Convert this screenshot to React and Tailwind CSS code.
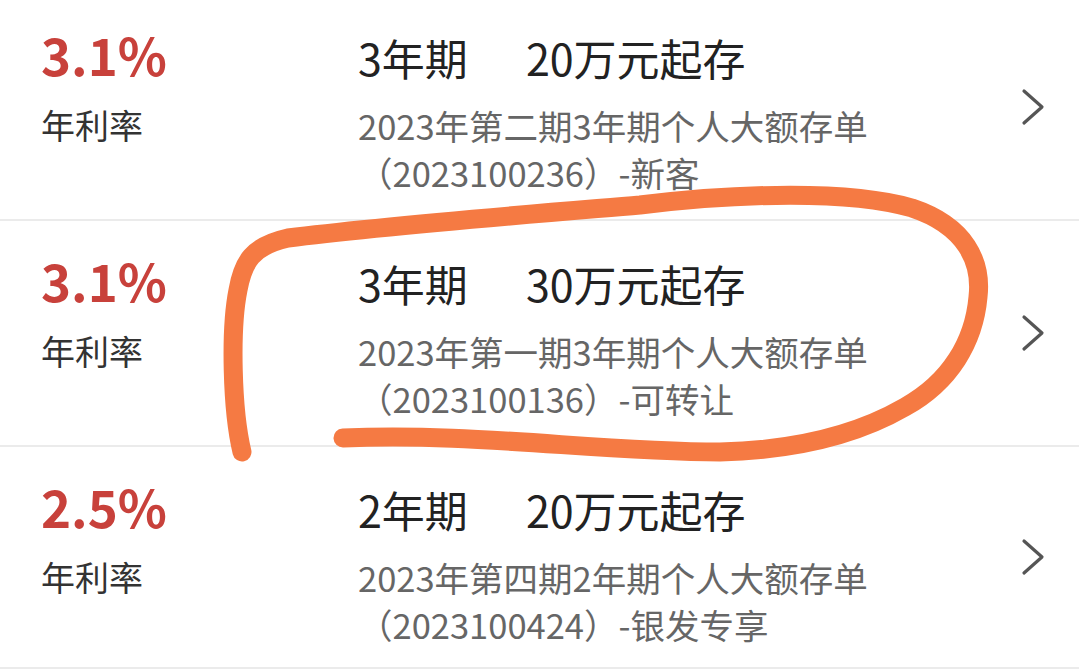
const products = [
  {
    rate: "3.1%",
    term: "3年期",
    min: "20万元起存",
    name: "2023年第二期3年期个人大额存单",
    code: "（2023100236）-新客",
  },
  {
    rate: "3.1%",
    term: "3年期",
    min: "30万元起存",
    name: "2023年第一期3年期个人大额存单",
    code: "（2023100136）-可转让",
  },
  {
    rate: "2.5%",
    term: "2年期",
    min: "20万元起存",
    name: "2023年第四期2年期个人大额存单",
    code: "（2023100424）-银发专享",
  },
];

// thin ">" used at the end of each row
const Arrow = () => (
  <svg width="24" height="38" viewBox="0 0 24 38" fill="none">
    <polyline
      points="3,3 21,19 3,35"
      stroke="#555"
      strokeWidth="3.2"
      strokeLinecap="round"
      strokeLinejoin="round"
    />
  </svg>
);

const ProductRow = ({ p, className }) => (
  <div className={`flex items-start border-b-2 border-[#ebebeb] pl-[41px] pr-[34px] ${className}`}>
    <div className="w-[317px] shrink-0 pt-[29px]">
      <div className="text-[51px] leading-[60px] font-bold text-[#c8413b]">{p.rate}</div>
      <div className="mt-[19px] text-[34px] leading-[44px] text-[#333]">年利率</div>
    </div>
    <div className="flex-1 pt-[37px]">
      <div className="flex text-[43px] leading-[50px] text-[#222]">
        <span>{p.term}</span>
        <span className="ml-[58px]">{p.min}</span>
      </div>
      <div className="mt-[20px] text-[34.5px] leading-[47px] text-[#666]">
        <div>{p.name}</div>
        <div>{p.code}</div>
      </div>
    </div>
    <div className="self-center">
      <Arrow />
    </div>
  </div>
);

export default function App() {
  return (
    <div
      className="relative h-[669px] w-full overflow-hidden bg-white"
      style={{ fontFamily: '"Noto Sans CJK SC", "Noto Sans", sans-serif' }}
    >
      <ProductRow p={products[0]} className="h-[226px] -mt-[5px]" />
      <ProductRow p={products[1]} className="h-[226px]" />
      <ProductRow p={products[2]} className="h-[222px]" />

      {/* marker scribble around the second product */}
      <svg
        className="pointer-events-none absolute inset-0"
        width="1079"
        height="669"
        viewBox="0 0 1079 669"
        fill="none"
      >
        <path
          d="M 242 452 C 232 410, 230 330, 238 290 C 243 262, 252 246, 288 238 C 380 226, 520 215, 640 205 C 740 193, 850 190, 912 208 C 966 226, 982 262, 978 297 C 974 342, 950 382, 905 407 C 860 433, 800 450, 720 452 C 600 452, 470 432, 343 438"
          stroke="#f57a43"
          strokeWidth="19"
          strokeLinecap="round"
          strokeLinejoin="round"
        />
      </svg>
    </div>
  );
}
